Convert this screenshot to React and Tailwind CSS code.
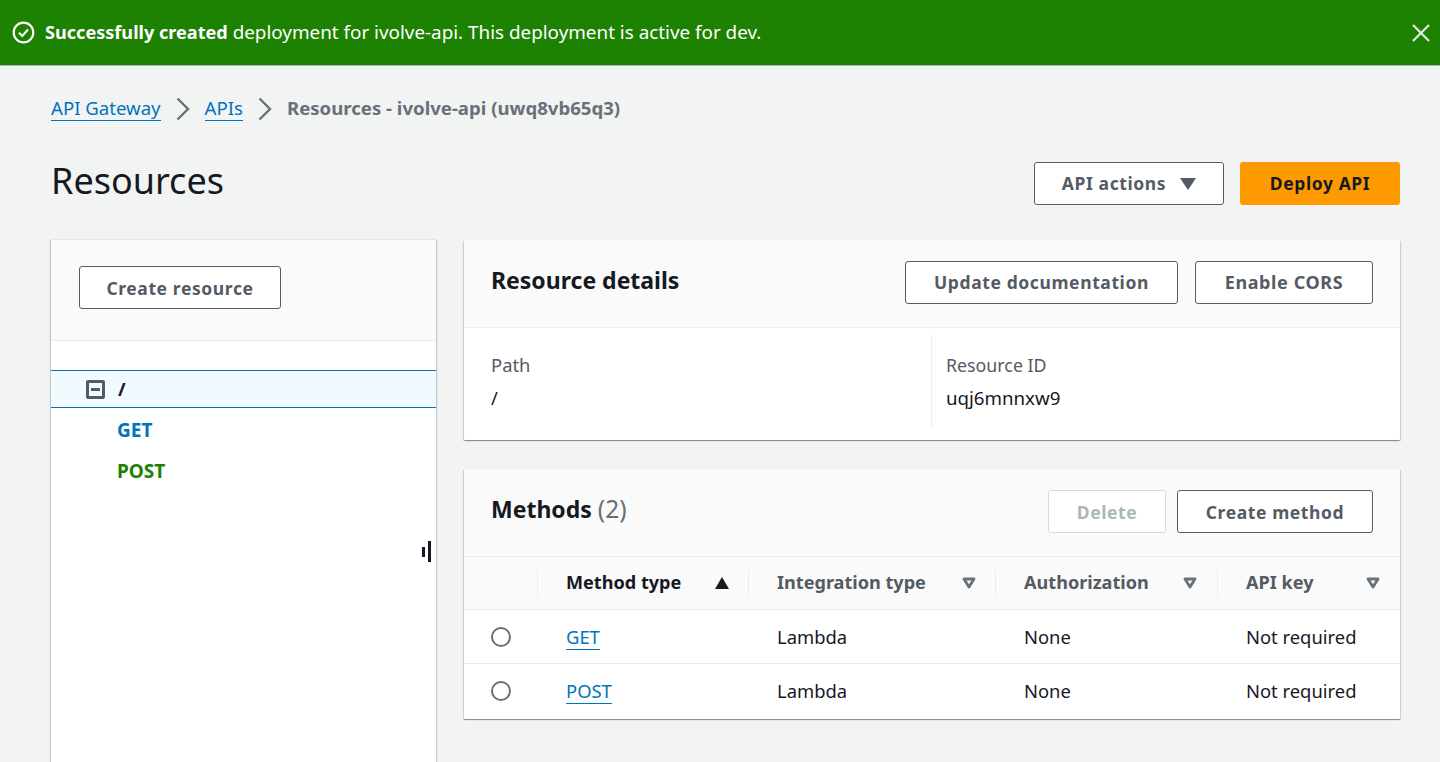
const Button = ({ children, className = '' }) => (
  <button className={`h-[43px] rounded-[3px] border border-[#545b64] bg-white text-[17.5px] font-bold tracking-[0.6px] text-[#545b64] flex items-center justify-center ${className}`}>
    {children}
  </button>
);

const FilterCaret = () => (
  <svg width="14" height="12" viewBox="0 0 14 12" className="shrink-0">
    <path d="M2 2h10L7 10z" fill="none" stroke="#687078" strokeWidth="2.8" strokeLinejoin="round" />
  </svg>
);

const Crumb = () => (
  <svg width="14" height="24" viewBox="0 0 14 24" fill="none" className="mx-[15px] shrink-0">
    <path d="M1.5 1.5L12 12 1.5 22.5" stroke="#687078" strokeWidth="2.4" />
  </svg>
);

const Divider = () => <div className="w-px h-[28px] bg-[#eaeded] shrink-0" />;

const Radio = () => <div className="w-[20px] h-[20px] rounded-full border-2 border-[#687078] bg-white" />;

const columns = 'grid grid-cols-[74px_211px_247px_222px_1fr]';

const MethodRow = ({ name, last }) => (
  <div className={`${columns} items-center text-[18.4px] text-[#16191f] ${last ? 'h-[55px] pb-[2px]' : 'h-[54px] border-b border-[#eaeded]'}`}>
    <div className="pl-[27px]"><Radio /></div>
    <div className="pl-[28px]">
      <a className="text-[#0073bb] border-b border-[#0073bb] leading-[24px] inline-block">{name}</a>
    </div>
    <div className="pl-[28px]">Lambda</div>
    <div className="pl-[28px]">None</div>
    <div className="pl-[28px]">Not required</div>
  </div>
);

const App = () => {
  return (
    <div className="w-[1440px] h-[762px] overflow-hidden bg-[#f2f3f3] font-['Noto_Sans','Open_Sans',sans-serif] text-[18.4px]">
      <div className="h-[66px] bg-[#1d8102] border-b border-[#aab7b8] text-white flex items-center pl-[12px] pr-[9px]">
        <svg width="23" height="23" viewBox="0 0 23 23" fill="none" className="shrink-0">
          <circle cx="11.5" cy="11.5" r="9.8" stroke="white" strokeWidth="2.2" />
          <path d="M7 11.8l3.2 3.2 5.8-6.4" stroke="white" strokeWidth="2.2" />
        </svg>
        <p className="ml-[10px] flex-1 text-[18.85px]"><span className="font-bold text-[18.1px]">Successfully created</span> deployment for ivolve-api. This deployment is active for dev.</p>
        <svg width="20" height="20" viewBox="0 0 20 20" fill="none">
          <path d="M2 2l16 16M18 2L2 18" stroke="#e5e9e8" strokeWidth="2.2" />
        </svg>
      </div>

      <div className="pl-[51px] pr-[40px]">
        <nav className="h-[85px] flex items-center text-[#0073bb] text-[18.6px]">
          <a className="border-b border-[#0073bb] leading-[24px]">API Gateway</a>
          <Crumb />
          <a className="border-b border-[#0073bb] leading-[24px]">APIs</a>
          <Crumb />
          <span className="font-bold text-[#687078] pb-[1px]">Resources - ivolve-api (uwq8vb65q3)</span>
        </nav>

        <div className="h-[89px] flex items-start justify-between">
          <h1 className="text-[36px] leading-[60px] text-[#16191f]">Resources</h1>
          <div className="flex gap-[16px] pt-[11px]">
            <Button className="w-[190px] gap-[14px]">
              API actions
              <svg width="16" height="12" viewBox="0 0 16 12"><path d="M0 0h16L8 12z" fill="#545b64" /></svg>
            </Button>
            <button className="w-[160px] h-[43px] rounded-[3px] bg-[#ff9900] text-[17.5px] font-bold tracking-[0.6px] text-[#16191f]">Deploy API</button>
          </div>
        </div>

        <div className="flex gap-[28px] items-start">
          <aside className="w-[385px] h-[560px] bg-white shadow-[1px_0_1px_0_rgba(0,28,36,0.2),-1px_0_1px_0_rgba(0,28,36,0.2)] shrink-0 relative">
            <div className="h-[101px] bg-[#fafafa] border-b border-[#eaeded] pl-[28px] pt-[26px]">
              <Button className="w-[202px] pt-[1px]">Create resource</Button>
            </div>
            <div className="mt-[29px] h-[38px] flex items-center bg-[#f1faff] border-y border-[#0073bb] pl-[35px]">
              <div className="w-[19px] h-[19px] rounded-[2px] border-[3px] border-[#545b64] flex items-center justify-center">
                <div className="w-[9px] h-[3px] bg-[#545b64]" />
              </div>
              <span className="ml-[13px] font-bold text-[#16191f]">/</span>
            </div>
            <div className="pl-[66px] font-bold text-[19px]">
              <div className="h-[45px] flex items-center text-[#0073bb]">GET</div>
              <div className="h-[37px] flex items-center text-[#1d8102]">POST</div>
            </div>
            <div className="absolute right-[5px] top-[301px] flex items-center gap-[3px]">
              <div className="w-[3px] h-[10px] bg-[#16191f]" />
              <div className="w-[3px] h-[21px] bg-[#16191f]" />
            </div>
          </aside>

          <div className="flex-1 min-w-0">
            <section className="bg-white rounded-[1px] shadow-[0_1px_1px_0_rgba(0,28,36,0.3),1px_1px_1px_0_rgba(0,28,36,0.15),-1px_1px_1px_0_rgba(0,28,36,0.15)]">
              <div className="h-[88px] bg-[#fafafa] border-b border-[#eaeded] flex items-center justify-between pl-[27px] pr-[27px]">
                <h2 className="text-[23px] font-bold text-[#16191f] pb-[7px]">Resource details</h2>
                <div className="flex gap-[17px] pb-[2px]">
                  <Button className="w-[273px]">Update documentation</Button>
                  <Button className="w-[178px] text-[18px]">Enable CORS</Button>
                </div>
              </div>
              <div className="h-[112px] flex pt-[7px] text-[#16191f]">
                <div className="w-[468px] h-[92px] border-r border-[#eaeded] pl-[27px] pt-[18px]">
                  <p className="text-[#545b64] leading-[24px]">Path</p>
                  <p className="mt-[9px] leading-[24px]">/</p>
                </div>
                <div className="pl-[14px] pt-[18px]">
                  <p className="text-[#545b64] leading-[24px] text-[17.8px]">Resource ID</p>
                  <p className="mt-[9px] leading-[24px] text-[18.7px]">uqj6mnnxw9</p>
                </div>
              </div>
            </section>

            <section className="mt-[29px] bg-white rounded-[1px] shadow-[0_1px_1px_0_rgba(0,28,36,0.3),1px_1px_1px_0_rgba(0,28,36,0.15),-1px_1px_1px_0_rgba(0,28,36,0.15)]">
              <div className="h-[88px] bg-[#fafafa] border-b border-[#eaeded] flex items-center justify-between pl-[27px] pr-[27px]">
                <h2 className="text-[23px] font-bold text-[#16191f] pb-[7px]">Methods <span className="font-normal text-[24.5px] text-[#687078]">(2)</span></h2>
                <div className="flex gap-[11px] pb-[2px]">
                  <button className="w-[118px] h-[43px] pt-[1px] rounded-[3px] border border-[#d5dbdb] bg-white text-[17.5px] font-bold tracking-[0.6px] text-[#aab7b8]">Delete</button>
                  <Button className="w-[196px] pt-[1px]">Create method</Button>
                </div>
              </div>
              <div className={`${columns} h-[53px] items-center bg-[#fafafa] border-b border-[#eaeded] font-bold text-[18.1px] text-[#545b64]`}>
                <div className="flex justify-end"><Divider /></div>
                <div className="flex items-center justify-between pl-[28px] text-[#16191f]">
                  Method type
                  <div className="flex items-center gap-[19px]">
                    <svg width="14" height="12" viewBox="0 0 14 12"><path d="M7 0l7 12H0z" fill="#16191f" /></svg>
                    <Divider />
                  </div>
                </div>
                <div className="flex items-center justify-between pl-[28px]">
                  Integration type
                  <div className="flex items-center gap-[19px]"><FilterCaret /><Divider /></div>
                </div>
                <div className="flex items-center justify-between pl-[28px]">
                  Authorization
                  <div className="flex items-center gap-[20px]"><FilterCaret /><Divider /></div>
                </div>
                <div className="flex items-center justify-between pl-[28px] pr-[20px]">
                  API key
                  <FilterCaret />
                </div>
              </div>
              <MethodRow name="GET" />
              <MethodRow name="POST" last />
            </section>
          </div>
        </div>
      </div>
    </div>
  );
};

export default App;
